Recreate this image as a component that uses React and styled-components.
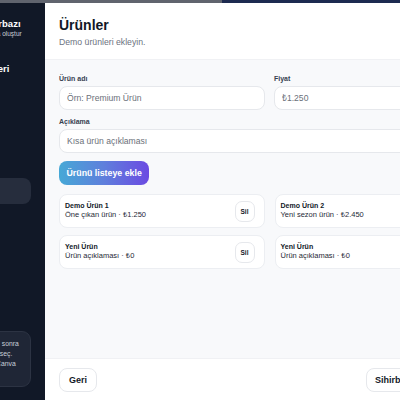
import React from "react";
import styled, { createGlobalStyle } from "styled-components";

const Global = createGlobalStyle`
  html, body { margin: 0; padding: 0; background: #111827; overflow: hidden; }
  body { font-family: "Liberation Sans", Arial, "Noto Sans", sans-serif; }
  * { box-sizing: border-box; }
`;

const Page = styled.div`
  width: 400px;
  height: 400px;
  display: flex;
  flex-direction: column;
  overflow: hidden;
`;

const TopStrip = styled.div`
  height: 3px;
  display: flex;
  flex-shrink: 0;
`;

const StripPart = styled.div`
  height: 100%;
  width: ${(p) => p.$w};
  flex: ${(p) => (p.$grow ? 1 : "none")};
  background: ${(p) => p.$bg};
`;

const Shell = styled.div`
  flex: 1;
  display: flex;
  margin-left: -70px;
  min-height: 0;
`;

const Sidebar = styled.aside`
  width: 115px;
  flex-shrink: 0;
  background: #111827;
  padding: 15px 14px 0;
  display: flex;
  flex-direction: column;
  color: #fff;
  white-space: nowrap;
`;

const Brand = styled.div`
  font-size: 9.5px;
  line-height: 12px;
  font-weight: 700;
`;

const BrandSub = styled.div`
  font-size: 6.5px;
  line-height: 8px;
  color: #c9ced8;
`;

const SectionTitle = styled.div`
  font-size: 9.5px;
  line-height: 12px;
  font-weight: 700;
  margin-top: 25px;
`;

const NavList = styled.nav`
  display: flex;
  flex-direction: column;
  gap: 6px;
  margin-top: 7px;
`;

const NavItem = styled.div`
  height: 26px;
  border-radius: 8px;
  background: ${(p) => (p.$active ? "#262d3d" : "transparent")};
  font-size: 6px;
  padding-left: 6px;
  display: flex;
  align-items: center;
  color: #9aa1ae;
`;

const Tip = styled.div`
  margin-top: auto;
  margin-bottom: 13px;
  height: 56px;
  border-radius: 9px;
  background: #1f2636;
  border: 1px solid #2c3343;
  padding: 7px 8px;
  font-size: 6.8px;
  line-height: 10px;
  color: #c9ced8;
`;

const Main = styled.section`
  width: 449px;
  flex-shrink: 0;
  background: #fff;
  display: flex;
  flex-direction: column;
`;

const Header = styled.header`
  height: 57px;
  flex-shrink: 0;
  padding: 13.5px 14px 0;
  border-bottom: 1px solid #f0f1f4;
`;

const Title = styled.h1`
  margin: 0;
  font-size: 14px;
  line-height: 17px;
  font-weight: 700;
  color: #111827;
`;

const Subtitle = styled.p`
  margin: 3.5px 0 0;
  font-size: 8.7px;
  line-height: 11px;
  color: #6b7280;
`;

const Body = styled.div`
  flex: 1;
  background: #f8f9fb;
  padding: 14px 14px 0;
  display: flex;
  flex-direction: column;
`;

const Row = styled.div`
  display: grid;
  grid-template-columns: 1fr 1fr;
  gap: 9px;
  margin-bottom: 7px;
`;

const Field = styled.label`
  display: flex;
  flex-direction: column;
  gap: 3px;
`;

const Label = styled.span`
  font-size: 7px;
  line-height: 9px;
  font-weight: 700;
  color: #374151;
`;

const Input = styled.input`
  height: 24px;
  border: 1px solid #e6e8ec;
  border-radius: 8px;
  background: #fff;
  padding: 0 7px;
  font-family: inherit;
  font-size: 8.6px;
  color: #111827;
  outline: none;
  &::placeholder { color: #6b7079; }
`;

const AddButton = styled.button`
  align-self: flex-start;
  margin-top: 8px;
  height: 24px;
  padding: 0 7.5px;
  border: none;
  border-radius: 8px;
  background: linear-gradient(90deg, #46a8d6 0%, #5f7fdc 50%, #6b4ae2 100%);
  color: #fff;
  font-family: inherit;
  font-size: 8.8px;
  font-weight: 700;
`;

const Grid = styled.div`
  margin-top: 9px;
  display: grid;
  grid-template-columns: 1fr 1fr;
  column-gap: 10px;
  row-gap: 7px;
`;

const Card = styled.div`
  height: 34px;
  background: #fff;
  border: 1px solid #eceef2;
  border-radius: 8px;
  padding: 0 9px 0 5px;
  display: flex;
  align-items: center;
  justify-content: space-between;
`;

const CardText = styled.div`
  display: flex;
  flex-direction: column;
  margin-top: -2px;
`;

const CardTitle = styled.span`
  font-size: 7px;
  line-height: 9px;
  font-weight: 700;
  color: #111827;
`;

const CardSub = styled.span`
  font-size: 7.5px;
  line-height: 9.5px;
  color: #1f2937;
`;

const SmallButton = styled.button`
  width: 20px;
  height: 21px;
  border: 1px solid #e6e8ec;
  border-radius: 7px;
  background: #fff;
  font-family: inherit;
  font-size: 6.5px;
  font-weight: 700;
  color: #111827;
  padding: 0;
`;

const Footer = styled.footer`
  height: 42px;
  flex-shrink: 0;
  padding: 9px 14px 0;
  border-top: 1px solid #f0f1f4;
  display: flex;
  justify-content: space-between;
  align-items: flex-start;
`;

const FooterButton = styled.button`
  height: 24px;
  padding: 0 ${(p) => p.$px || 9}px;
  border: 1px solid #e6e8ec;
  border-radius: 8px;
  background: #fff;
  font-family: inherit;
  font-size: 9px;
  font-weight: 700;
  color: #111827;
`;

const products = [
  { name: "Demo Ürün 1", desc: "Öne çıkan ürün", price: "₺1.250" },
  { name: "Demo Ürün 2", desc: "Yeni sezon ürün", price: "₺2.450" },
  { name: "Yeni Ürün", desc: "Ürün açıklaması", price: "₺0" },
  { name: "Yeni Ürün", desc: "Ürün açıklaması", price: "₺0" },
];

export default function App() {
  return (
    <Page>
      <Global />
      <TopStrip>
        <StripPart $w="222px" $bg="#60646e" />
        <StripPart $grow $bg="#1d2a50" />
      </TopStrip>
      <Shell>
        <Sidebar>
          <Brand>Mağaza Sihirbazı</Brand>
          <BrandSub>Adım adım mağaza oluştur</BrandSub>
          <SectionTitle>Demo Ürünleri</SectionTitle>
          <NavList>
            <NavItem>Mağaza</NavItem>
            <NavItem>Tema</NavItem>
            <NavItem>Logo</NavItem>
            <NavItem $active>Ürün</NavItem>
          </NavList>
          <Tip>
            Ürünleri ekleyip sonra
            <br />
            uygun bir tema seç.
            <br />
            Tasarımını da Canva
            <br />
            ile düzenle.
          </Tip>
        </Sidebar>
        <Main>
          <Header>
            <Title>Ürünler</Title>
            <Subtitle>Demo ürünleri ekleyin.</Subtitle>
          </Header>
          <Body>
            <Row>
              <Field>
                <Label>Ürün adı</Label>
                <Input placeholder="Örn: Premium Ürün" />
              </Field>
              <Field>
                <Label>Fiyat</Label>
                <Input placeholder="₺1.250" />
              </Field>
            </Row>
            <Field>
              <Label>Açıklama</Label>
              <Input placeholder="Kısa ürün açıklaması" />
            </Field>
            <AddButton>Ürünü listeye ekle</AddButton>
            <Grid>
              {products.map((p, i) => (
                <Card key={i}>
                  <CardText>
                    <CardTitle>{p.name}</CardTitle>
                    <CardSub>
                      {p.desc} · {p.price}
                    </CardSub>
                  </CardText>
                  <SmallButton>Sil</SmallButton>
                </Card>
              ))}
            </Grid>
          </Body>
          <Footer>
            <FooterButton>Geri</FooterButton>
            <FooterButton $px={8}>Sihirbazı kaydet ve çık</FooterButton>
          </Footer>
        </Main>
      </Shell>
    </Page>
  );
}
